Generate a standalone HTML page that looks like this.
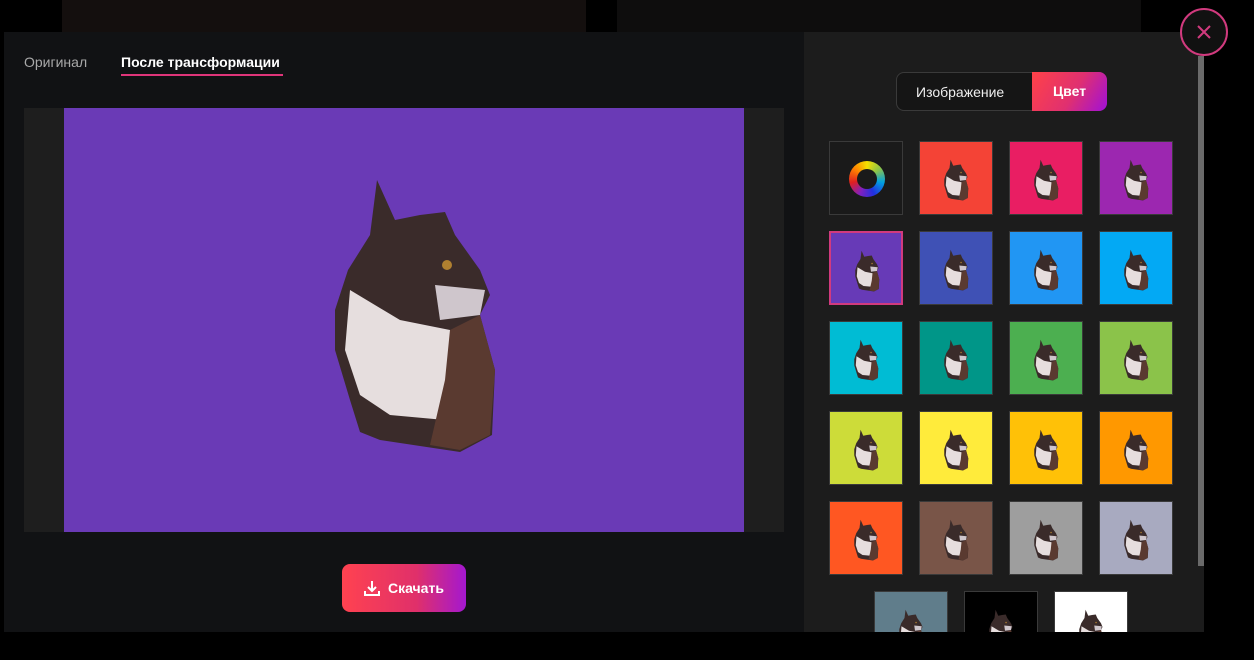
<!DOCTYPE html>
<html><head><meta charset="utf-8"><style>
*{margin:0;padding:0;box-sizing:border-box}
body{width:1254px;height:660px;background:#000;position:relative;overflow:hidden;font-family:"Liberation Sans",sans-serif}
.abs{position:absolute}
.sq{position:absolute;width:74px;height:74px;border:1px solid #3a3a3a}
.sq svg{position:absolute;left:22px;top:16px;width:30px;height:44px}
</style></head><body>
<svg width="0" height="0" style="position:absolute">
<defs>
<symbol id="cat" viewBox="0 0 200 290">
<path d="M57 10 L75 50 L100 45 L125 42 L135 65 L160 100 L170 125 L160 145 L175 200 L172 265 L140 282 L100 276 L60 270 L40 262 L30 230 L15 180 L15 140 L28 100 L50 65 Z" fill="#3a2b2a"/>
<path d="M30 120 L80 150 L130 160 L140 175 L125 250 L70 245 L40 225 L25 180 Z" fill="#e6dede"/>
<path d="M115 115 L165 120 L160 145 L120 150 Z" fill="#cfc6cc"/>
<path d="M130 160 L160 145 L175 200 L170 265 L140 280 L110 275 L125 210 Z" fill="#5a3a30"/>
<circle cx="127" cy="95" r="5" fill="#b08030"/>
</symbol>
</defs></svg>
<div class="abs" style="left:62px;top:0;width:524px;height:32px;background:#140f0e"></div>
<div class="abs" style="left:617px;top:0;width:524px;height:32px;background:#0e0d0d"></div>
<div class="abs" style="left:4px;top:32px;width:800px;height:600px;background:#111214"></div>
<div class="abs" style="left:24px;top:54px;font-size:14px;color:#a9a9a9">Оригинал</div>
<div class="abs" style="left:121px;top:54px;font-size:14px;color:#fff;font-weight:bold">После трансформации</div>
<div class="abs" style="left:121px;top:74px;width:162px;height:2px;background:#e0357a"></div>
<div class="abs" style="left:24px;top:108px;width:760px;height:424px;background:#1e1e1e"></div>
<div class="abs" style="left:64px;top:108px;width:680px;height:424px;background:#6a3ab6"></div>
<svg class="abs" style="left:320px;top:170px" width="200" height="290"><use href="#cat"/></svg>
<div class="abs" style="left:342px;top:564px;width:124px;height:48px;border-radius:8px;background:linear-gradient(90deg,#ff4250,#e0306a 60%,#a418d0);color:#fff;font-weight:bold;font-size:14px;line-height:48px;padding-left:46px">Скачать</div>
<svg class="abs" style="left:363px;top:579px" width="18" height="18" viewBox="0 0 18 18" fill="none" stroke="#fff" stroke-width="2"><path d="M9 2v10M5 8l4 4 4-4M2 12v4h14v-4"/></svg>
<div class="abs" style="left:804px;top:32px;width:394px;height:600px;background:#1c1c1c"></div>
<div class="abs" style="left:1198px;top:56px;width:6px;height:510px;background:#6a6a6a"></div>
<div class="abs" style="left:1198px;top:566px;width:6px;height:66px;background:#1c1c1c"></div>
<div class="abs" style="left:1180px;top:8px;width:48px;height:48px;border-radius:50%;border:2px solid #d13a7e;background:#111"></div>
<svg class="abs" style="left:1196px;top:24px" width="16" height="16" viewBox="0 0 16 16" stroke="#d13a7e" stroke-width="2"><path d="M2 2L14 14M14 2L2 14"/></svg>
<div class="abs" style="left:896px;top:72px;width:211px;height:39px;border:1px solid #3a3a3a;border-radius:8px;background:#151515"></div>
<div class="abs" style="left:916px;top:84px;font-size:14px;color:#eee">Изображение</div>
<div class="abs" style="left:1032px;top:72px;width:75px;height:39px;border-radius:0 8px 8px 0;background:linear-gradient(120deg,#ff4248,#e03070 55%,#a010d8);color:#fff;font-weight:bold;font-size:14px;line-height:39px;text-align:center">Цвет</div>
<div class="sq" style="left:829px;top:141px;background:#1a1a1a"><div style="position:absolute;left:19px;top:19px;width:36px;height:36px;border-radius:50%;background:conic-gradient(#f6e000,#8bc34a,#00a0e0,#2030e0,#8020c0,#e02020,#ff8000,#f6e000)"></div><div style="position:absolute;left:27px;top:27px;width:20px;height:20px;border-radius:50%;background:#1a1a1a"></div></div>
<div id="g"></div>
<script>
var c=[["#f44336","#e91e63","#9c27b0"],["#673ab7","#3f51b5","#2196f3","#03a9f4"],["#00bcd4","#009688","#4caf50","#8bc34a"],["#cddc39","#ffeb3b","#ffc107","#ff9800"],["#ff5722","#795548","#9e9e9e","#a8aac0"]];
var h="",xs=[830,920,1010,1100],ys=[142,232,322,412,502];
c.forEach(function(r,i){r.forEach(function(col,j){var x=i==0?xs[j+1]:xs[j];var b=(i==1&&j==0)?"border:2px solid #d13a7e;":"";h+='<div class="sq" style="left:'+(x-1)+'px;top:'+(ys[i]-1)+'px;background:'+col+';'+b+'"><svg><use href="#cat"/></svg></div>';});});
[["#607d8b",875],["#000",965],["#fff",1055]].forEach(function(a){h+='<div class="sq" style="left:'+(a[1]-1)+'px;top:591px;background:'+a[0]+';height:41px;border-bottom:none;overflow:hidden"><svg><use href="#cat"/></svg></div>';});
document.getElementById("g").innerHTML=h;
</script>
</body></html>
